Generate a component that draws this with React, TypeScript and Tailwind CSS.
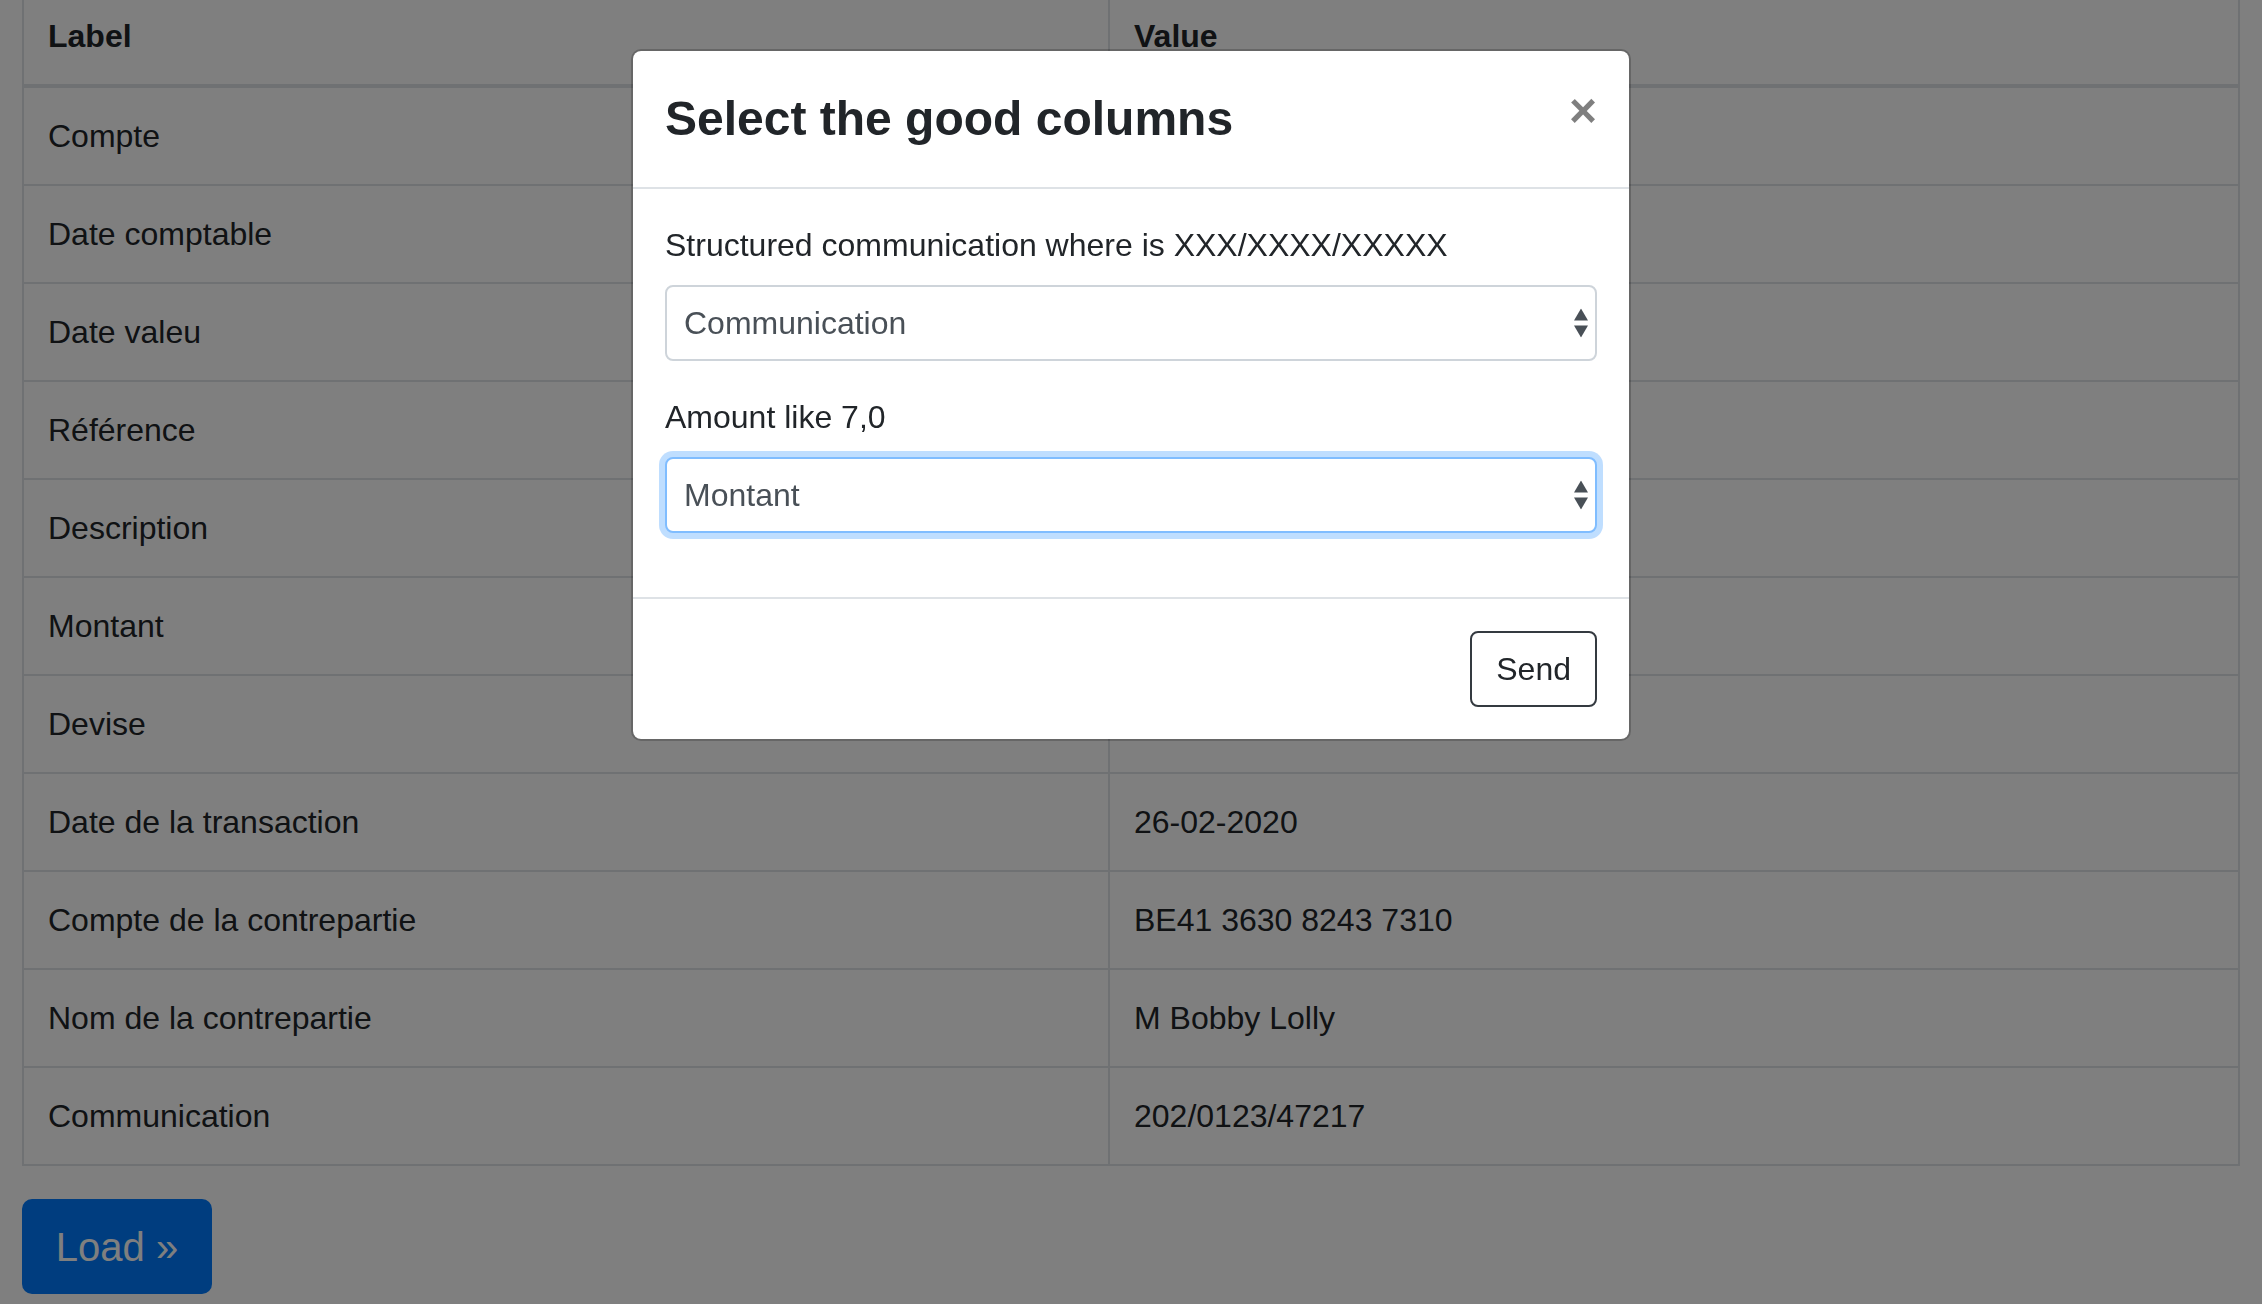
import React from 'react';

const rows: [string, string][] = [
  ['Compte', ''],
  ['Date comptable', ''],
  ['Date valeu', ''],
  ['Référence', ''],
  ['Description', ''],
  ['Montant', ''],
  ['Devise', ''],
  ['Date de la transaction', '26-02-2020'],
  ['Compte de la contrepartie', 'BE41 3630 8243 7310'],
  ['Nom de la contrepartie', 'M Bobby Lolly'],
  ['Communication', '202/0123/47217'],
];

function SelectArrows() {
  return (
    <svg
      className="pointer-events-none absolute right-[9px] top-1/2 -translate-y-1/2"
      width="14"
      height="29"
      viewBox="0 0 14 29"
    >
      <polygon points="0,12 7,0 14,12" fill="#495057" />
      <polygon points="0,17 14,17 7,29" fill="#495057" />
    </svg>
  );
}

function ColumnSelect({ value, focused }: { value: string; focused?: boolean }) {
  return (
    <div className="relative">
      <select
        defaultValue={value}
        className={
          focused
            ? 'block h-[76px] w-full appearance-none rounded-[8px] border-2 border-[#80bdff] bg-white pl-[17px] text-[32px] text-[#495057] shadow-[0_0_0_6px_rgba(0,123,255,0.25)] outline-none'
            : 'block h-[76px] w-full appearance-none rounded-[8px] border-2 border-[#ced4da] bg-white pl-[17px] text-[32px] text-[#495057] outline-none'
        }
      >
        {rows.map(([label]) => (
          <option key={label}>{label}</option>
        ))}
      </select>
      <SelectArrows />
    </div>
  );
}

export default function App() {
  return (
    <div className="min-h-screen bg-white px-[22px] font-['Liberation_Sans',Arial,sans-serif] text-[#212529]">
      {/* page is scrolled a little, header row is cut at the top */}
      <table className="-mt-[14px] w-full border-collapse border-2 border-[#dee2e6] text-[32px] leading-[48px]">
        <thead>
          <tr>
            <th className="w-[1086px] border-2 border-b-4 border-[#dee2e6] p-[24px] text-left font-bold">Label</th>
            <th className="border-2 border-b-4 border-[#dee2e6] p-[24px] text-left font-bold">Value</th>
          </tr>
        </thead>
        <tbody>
          {rows.map(([label, value]) => (
            <tr key={label}>
              <td className="border-2 border-[#dee2e6] p-[24px]">{label}</td>
              <td className="border-2 border-[#dee2e6] p-[24px]">{value}</td>
            </tr>
          ))}
        </tbody>
      </table>

      <button className="mt-[33px] h-[95px] w-[190px] rounded-[10px] bg-[#007bff] text-[40px] text-white">
        Load »
      </button>

      {/* Modal */}
      <div className="fixed inset-0 z-10 flex items-start justify-center bg-black/50">
        <div className="mt-[49px] w-[1000px] rounded-[10px] border-2 border-black/20 bg-white bg-clip-padding">
          <div className="flex items-start justify-between border-b-2 border-[#dee2e6] p-[32px]">
            <h4 className="text-[48px] font-bold leading-[72px] text-[#212529]">Select the good columns</h4>
            <button className="text-[48px] font-bold leading-[56px] text-black/50">×</button>
          </div>

          <div className="p-[32px]">
            <div className="mb-[32px]">
              <label className="mb-[16px] block text-[32px] leading-[48px]">
                Structured communication where is XXX/XXXX/XXXXX
              </label>
              <ColumnSelect value="Communication" />
            </div>
            <div className="mb-[32px]">
              <label className="mb-[16px] block text-[32px] leading-[48px]">Amount like 7,0</label>
              <ColumnSelect value="Montant" focused />
            </div>
          </div>

          <div className="flex justify-end border-t-2 border-[#dee2e6] p-[32px]">
            <button className="h-[76px] rounded-[8px] border-2 border-[#343a40] px-[24px] text-[32px] text-[#212529]">
              Send
            </button>
          </div>
        </div>
      </div>
    </div>
  );
}
